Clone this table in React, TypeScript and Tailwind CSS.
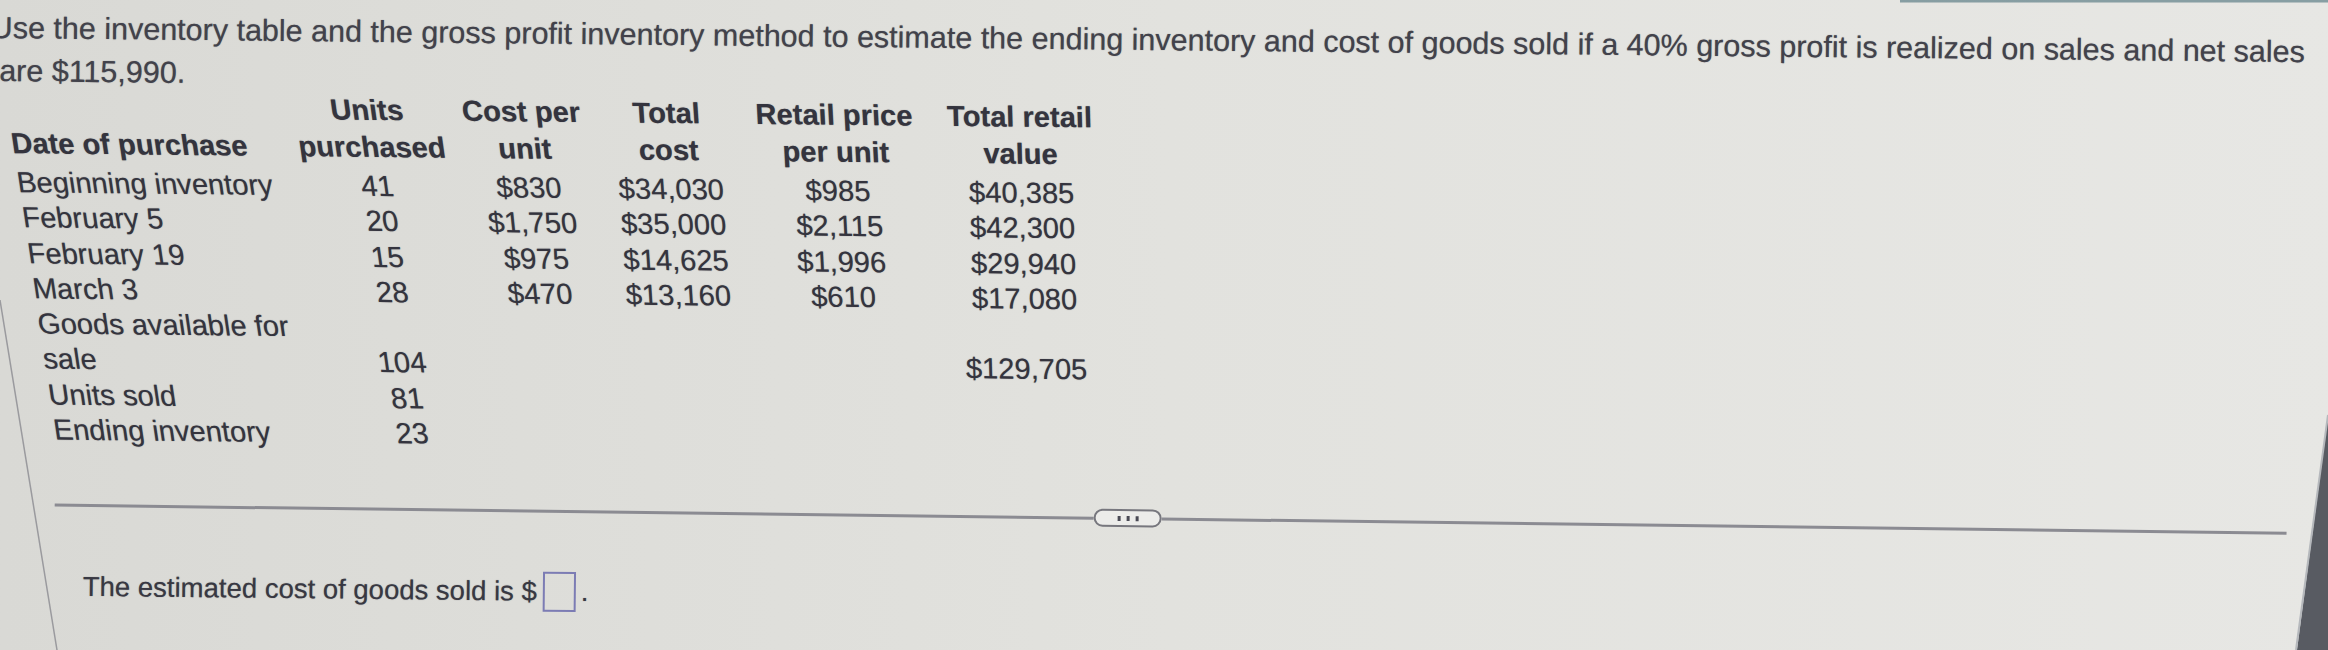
const cols = [
  {
    width: "w-[150px]",
    skew: "skew-x-[8.6deg]",
    head: ["Units", "purchased"],
    rows: ["41", "20", "15", "28", "", "104", "81", "23"],
  },
  {
    width: "w-[160px]",
    skew: "skew-x-[6.6deg]",
    head: ["Cost per", "unit"],
    rows: ["$830", "$1,750", "$975", "$470", "", "", "", ""],
  },
  {
    width: "w-[132px]",
    skew: "skew-x-[4.4deg]",
    head: ["Total", "cost"],
    rows: ["$34,030", "$35,000", "$14,625", "$13,160", "", "", "", ""],
  },
  {
    width: "w-[204px]",
    skew: "skew-x-[3.6deg]",
    head: ["Retail price", "per unit"],
    rows: ["$985", "$2,115", "$1,996", "$610", "", "", "", ""],
  },
  {
    width: "w-[168px]",
    skew: "skew-x-[2.2deg]",
    head: ["Total retail", "value"],
    rows: ["$40,385", "$42,300", "$29,940", "$17,080", "", "$129,705", "", ""],
  },
];

const labels = [
  "Beginning inventory",
  "February 5",
  "February 19",
  "March 3",
  "Goods available for",
  "sale",
  "Units sold",
  "Ending inventory",
];

const cell = "h-[35.3px] leading-[35.3px] whitespace-nowrap";

const App = () => {
  return (
    <div className="relative w-[2328px] h-[650px] overflow-hidden bg-linear-to-r from-[#d9d9d5] via-[#e2e2de] to-[#e7e7e4] font-['Liberation_Sans',Arial,sans-serif] text-[#34343e] [text-shadow:0_0_1px_rgba(45,45,55,0.55)]">
      <div className="rotate-[0.6deg] origin-top-left">
        <div className="pt-[6px] text-[30.5px] leading-[43px] text-[#42424b] whitespace-nowrap">
          <div className="-ml-[9px]">
            Use the inventory table and the gross profit inventory method to estimate the ending inventory and cost of
            goods sold if a 40% gross profit is realized on sales and net sales
          </div>
          <div>are $115,990.</div>
        </div>

        {/* inventory table */}
        <div className="-mt-[4.5px] ml-[4px] flex text-[29.1px]">
          <div className="w-[286px] skew-x-[9deg] origin-top">
            <div className="h-[77px] pt-[37px] leading-[37px] font-bold whitespace-nowrap">Date of purchase</div>
            {labels.map((l) => (
              <div key={l} className={cell}>
                {l}
              </div>
            ))}
          </div>
          {cols.map((c) => (
            <div key={c.head[0]} className={`${c.width} ${c.skew} origin-top text-center`}>
              <div className="h-[77px] font-bold leading-[37px] whitespace-nowrap">
                <div>{c.head[0]}</div>
                <div>{c.head[1]}</div>
              </div>
              {c.rows.map((v, i) => (
                <div key={i} className={cell}>
                  {v}
                </div>
              ))}
            </div>
          ))}
        </div>

        {/* divider with collapse handle */}
        <div className="mt-[48px] ml-[60px] w-[2232px] h-[18px] flex items-center rotate-[0.12deg] origin-left">
          <div className="w-[1039px] h-[3px] bg-[#8b8b92]" />
          <div className="w-[68px] h-[18px] rounded-full border-2 border-[#77777e] bg-[#ececea] flex items-center justify-center gap-[6px]">
            <span className="w-[3px] h-[5px] bg-[#4a4a55]" />
            <span className="w-[3px] h-[5px] bg-[#4a4a55]" />
            <span className="w-[3px] h-[5px] bg-[#4a4a55]" />
          </div>
          <div className="flex-1 h-[3px] bg-[#8b8b92]" />
        </div>

        <div className="mt-[53px] ml-[89px] h-[40px] flex items-center text-[27.5px] text-[#383842]">
          <span>The estimated cost of goods sold is $</span>
          <div className="ml-[6px] w-[33px] h-[40px] border-2 border-[#7c7cb4]" />
          <span className="ml-[5px]">.</span>
        </div>
      </div>

      <svg className="absolute inset-0 pointer-events-none" width="2328" height="650" viewBox="0 0 2328 650">
        <line x1="0" y1="300" x2="57" y2="650" stroke="#9a9a9e" strokeWidth="1.5" />
        <line x1="1900" y1="1" x2="2328" y2="1" stroke="#5e7f88" strokeWidth="3" strokeOpacity="0.7" />
        <polygon points="2328,415 2297,650 2328,650" fill="#585b62" />
        <line x1="2328" y1="415" x2="2296" y2="650" stroke="#b5b8bc" strokeWidth="2" />
      </svg>
    </div>
  );
};

export default App;
